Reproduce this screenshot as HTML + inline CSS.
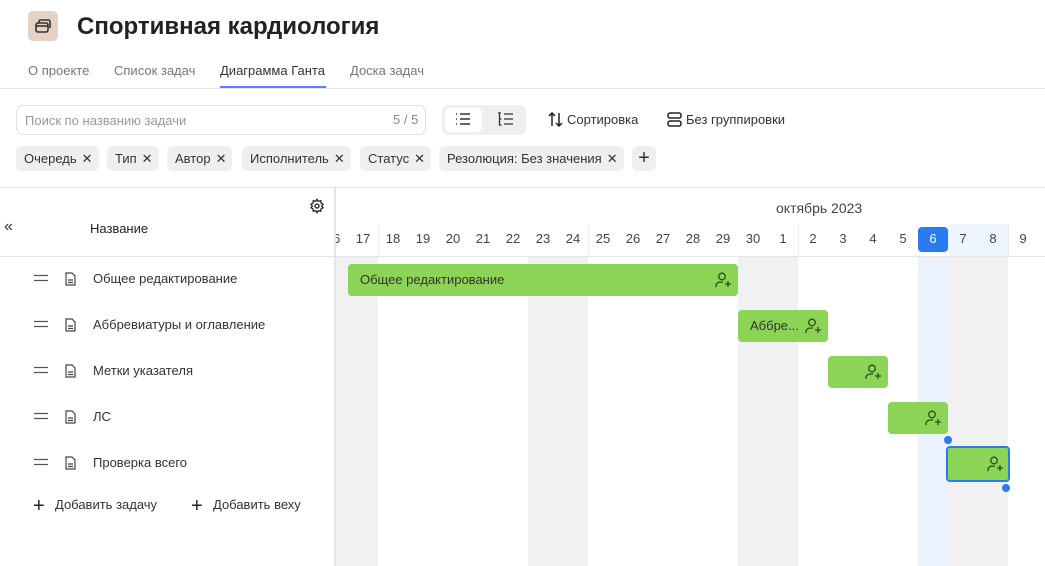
<!DOCTYPE html>
<html><head><meta charset="utf-8"><style>
*{box-sizing:border-box;margin:0;padding:0}
body{width:1045px;height:566px;overflow:hidden;background:#fff;font-family:"Liberation Sans",sans-serif;color:#222;position:relative}
.a{position:absolute}
.t{font-size:13px;color:#333;white-space:nowrap}
.chip{position:absolute;top:146px;height:25px;background:#efefef;border-radius:6px;font-size:13px;line-height:25px;padding:0 6px 0 8px;color:#333;white-space:nowrap}
.chip b{font-weight:normal;margin-left:5px;font-size:13px}
.day{position:absolute;top:231px;width:30px;text-align:center;font-size:13px;color:#444}
.bar{position:absolute;background:#8bd455;border-radius:4px;height:32px}
</style></head><body>
<div class="a" style="left:28px;top:11px;width:30px;height:30px;background:#e6d2c2;border-radius:5px"></div>
<svg class="a" style="left:33px;top:16px" width="20" height="20" viewBox="0 0 20 20" fill="none" stroke="#333" stroke-width="1.6"><rect x="3" y="7" width="12" height="9" rx="2"/><path d="M6 7V5.5a1.5 1.5 0 0 1 1.5-1.5h8a1.5 1.5 0 0 1 1.5 1.5V12"/><path d="M3 10h12"/></svg>
<div class="a" style="left:77px;top:13px;font-size:24px;font-weight:bold;color:#222">Спортивная кардиология</div>
<div class="a t" style="left:28px;top:63px;color:#777">О проекте</div>
<div class="a t" style="left:114px;top:63px;color:#777">Список задач</div>
<div class="a t" style="left:220px;top:63px;color:#333">Диаграмма Ганта</div>
<div class="a t" style="left:350px;top:63px;color:#777">Доска задач</div>
<div class="a" style="left:220px;top:86px;width:106px;height:2px;background:#5282ff"></div>
<div class="a" style="left:0;top:88px;width:1045px;height:1px;background:#e5e5e5"></div>
<div class="a" style="left:16px;top:105px;width:410px;height:30px;border:1px solid #e0e0e0;border-radius:7px"></div>
<div class="a t" style="left:25px;top:113px;color:#999">Поиск по названию задачи</div>
<div class="a t" style="left:393px;top:112px;color:#888">5 / 5</div>
<div class="a" style="left:442px;top:105px;width:84px;height:30px;background:#efefef;border-radius:7px"></div>
<div class="a" style="left:445px;top:108px;width:37px;height:24px;background:#fff;border-radius:5px"></div>
<svg class="a" style="left:455px;top:112px" width="16" height="14" viewBox="0 0 16 14" stroke="#333" stroke-width="1.4"><path d="M1 2h1M1 7h1M1 12h1M5 2h10M5 7h10M5 12h10"/></svg>
<svg class="a" style="left:497px;top:112px" width="18" height="15" viewBox="0 0 18 15" stroke="#333" stroke-width="1.3" fill="none"><path d="M1 1h3M2.5 1v12h2M2.5 7h2M7 2h9M7 7h9M7 12h9"/></svg>
<svg class="a" style="left:548px;top:112px" width="16" height="15" viewBox="0 0 16 15" stroke="#222" stroke-width="1.5" fill="none"><path d="M4 14V1M1 4l3-3 3 3M11 1v13M8 11l3 3 3-3"/></svg>
<div class="a t" style="left:567px;top:112px">Сортировка</div>
<svg class="a" style="left:667px;top:112px" width="15" height="15" viewBox="0 0 15 15" stroke="#222" stroke-width="1.5" fill="none"><rect x="1" y="1" width="13" height="5" rx="2"/><rect x="1" y="9" width="13" height="5" rx="2"/></svg>
<div class="a t" style="left:686px;top:112px">Без группировки</div>
<div class="chip" style="left:16px">Очередь<b>✕</b></div>
<div class="chip" style="left:107px">Тип<b>✕</b></div>
<div class="chip" style="left:167px">Автор<b>✕</b></div>
<div class="chip" style="left:242px">Исполнитель<b>✕</b></div>
<div class="chip" style="left:360px">Статус<b>✕</b></div>
<div class="chip" style="left:439px">Резолюция: Без значения<b>✕</b></div>
<div class="chip" style="left:632px;width:24px;padding:0;text-align:center;font-size:20px">+</div>
<div class="a" style="left:0;top:187px;width:1045px;height:1px;background:#e5e5e5"></div>
<div class="a" style="left:336px;top:257px;width:42px;height:309px;background:#f1f1f1"></div>
<div class="a" style="left:528px;top:257px;width:60px;height:309px;background:#f1f1f1"></div>
<div class="a" style="left:738px;top:257px;width:60px;height:309px;background:#f1f1f1"></div>
<div class="a" style="left:948px;top:257px;width:60px;height:309px;background:#f1f1f1"></div>
<div class="a" style="left:918px;top:257px;width:30px;height:309px;background:#ebf2fd"></div>
<div class="a" style="left:948px;top:224px;width:60px;height:32px;background:#eef4fd;border-radius:4px"></div>
<div class="a" style="left:918px;top:227px;width:30px;height:25px;background:#2a7bef;border-radius:4px"></div>
<div class="a" style="left:378px;top:224px;width:1px;height:32px;background:#eee"></div>
<div class="a" style="left:588px;top:224px;width:1px;height:32px;background:#eee"></div>
<div class="a" style="left:798px;top:224px;width:1px;height:32px;background:#eee"></div>
<div class="a" style="left:1008px;top:224px;width:1px;height:32px;background:#eee"></div>
<div class="a t" style="left:776px;top:200px;font-size:14px;color:#444">октябрь 2023</div>
<div class="day" style="left:318px">16</div><div class="day" style="left:348px">17</div><div class="day" style="left:378px">18</div><div class="day" style="left:408px">19</div><div class="day" style="left:438px">20</div><div class="day" style="left:468px">21</div><div class="day" style="left:498px">22</div><div class="day" style="left:528px">23</div><div class="day" style="left:558px">24</div><div class="day" style="left:588px">25</div><div class="day" style="left:618px">26</div><div class="day" style="left:648px">27</div><div class="day" style="left:678px">28</div><div class="day" style="left:708px">29</div><div class="day" style="left:738px">30</div><div class="day" style="left:768px">1</div><div class="day" style="left:798px">2</div><div class="day" style="left:828px">3</div><div class="day" style="left:858px">4</div><div class="day" style="left:888px">5</div><div class="day" style="left:918px;color:#fff">6</div><div class="day" style="left:948px">7</div><div class="day" style="left:978px">8</div><div class="day" style="left:1008px">9</div>
<div class="a" style="left:0;top:256px;width:1045px;height:1px;background:#e5e5e5"></div>
<div class="a" style="left:0;top:188px;width:336px;height:378px;background:#fff;border-right:1px solid #e5e5e5"></div>
<div class="a" style="left:4px;top:218px;font-size:16px;color:#333">«</div>
<div class="a t" style="left:90px;top:221px;color:#222">Название</div>
<svg class="a" style="left:309px;top:198px" width="16" height="16" viewBox="0 0 24 24" fill="none" stroke="#222" stroke-width="2"><circle cx="12" cy="12" r="3"/><path d="M12 2l2 3 3.5-1 .5 3.5 3 2-2 2.5 2 2.5-3 2-.5 3.5-3.5-1-2 3-2-3-3.5 1-.5-3.5-3-2 2-2.5-2-2.5 3-2 .5-3.5 3.5 1z"/></svg>
<div class="a" style="left:0;top:256px;width:335px;height:1px;background:#e5e5e5"></div>
<div class="a" style="left:334px;top:188px;width:1px;height:378px;background:#e5e5e5"></div>
<div id="rows"></div>
<div class="a" style="left:33px;top:495px;font-size:20px;color:#222">+</div>
<div class="a t" style="left:55px;top:497px">Добавить задачу</div>
<div class="a" style="left:191px;top:495px;font-size:20px;color:#222">+</div>
<div class="a t" style="left:213px;top:497px">Добавить веху</div>
<div class="bar" style="left:348px;top:264px;width:390px"><span class="a t" style="left:12px;top:8px">Общее редактирование</span></div>
<div class="bar" style="left:738px;top:310px;width:90px"><span class="a t" style="left:12px;top:8px">Аббре...</span></div>
<div class="bar" style="left:828px;top:356px;width:60px"></div>
<div class="bar" style="left:888px;top:402px;width:60px"></div>
<div class="bar" style="left:946px;top:446px;width:64px;height:36px;border:2px solid #2a7bef"></div>
<div class="a" style="left:944px;top:436px;width:8px;height:8px;border-radius:50%;background:#2a7bef"></div>
<div class="a" style="left:1002px;top:484px;width:8px;height:8px;border-radius:50%;background:#2a7bef"></div>
<script>
var ys=[279,325,371,417,463],n=["Общее редактирование","Аббревиатуры и оглавление","Метки указателя","ЛС","Проверка всего"],h="";
for(var i=0;i<5;i++){var y=ys[i];
h+='<svg class="a" style="left:34px;top:'+(y-5)+'px" width="14" height="8"><path d="M0 1.5h14M0 6.5h14" stroke="#555" stroke-width="1.3"/></svg>';
h+='<svg class="a" style="left:65px;top:'+(y-7)+'px" width="11" height="14" viewBox="0 0 11 14" fill="none" stroke="#444" stroke-width="1.2"><path d="M1 1h6l3 3v9H1z"/><path d="M3 8h5M3 10.5h5"/></svg>';
h+='<div class="a t" style="left:93px;top:'+(y-8)+'px">'+n[i]+'</div>';}
document.getElementById('rows').innerHTML=h;
var bx=[[738,264],[828,310],[888,356],[948,402],[1010,448]],s="";
bx.forEach(function(b){s+='<svg class="a" style="left:'+(b[0]-23)+'px;top:'+(b[1]+8)+'px" width="17" height="16" viewBox="0 0 17 16" fill="none" stroke="#2f4a1c" stroke-width="1.3"><circle cx="7" cy="4.5" r="3.3"/><path d="M1 15v-1.5c0-2 2-3.5 5-3.5h2"/><path d="M13 9v6M10 12h6"/></svg>';});
document.body.insertAdjacentHTML('beforeend',s);
</script>
</body></html>
